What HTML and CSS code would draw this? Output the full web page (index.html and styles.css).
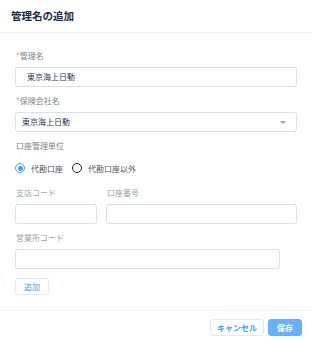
FILE: index.html
```html
<!DOCTYPE html>
<html lang="ja">
  <head>
    <meta charset="UTF-8" />
    <link rel="stylesheet" href="styles.css">
  </head>
  <body>
    <div class="dialog">
      <div class="header">
        <h2>管理名の追加</h2>
      </div>
      <div class="body">
        <label class="label"><span class="req">*</span>管理名</label>
        <div class="input input-indent">東京海上日動</div>

        <label class="label"><span class="req">*</span>保険会社名</label>
        <div class="input select">
          <span>東京海上日動</span>
          <span class="arrow"></span>
        </div>

        <label class="label">口座管理単位</label>
        <div class="radios">
          <span class="radio checked"><span class="dot"></span></span>
          <span class="radio-text">代勘口座</span>
          <span class="radio"></span>
          <span class="radio-text">代勘口座以外</span>
        </div>

        <div class="row">
          <div class="col short">
            <label class="label light">支店コード</label>
            <div class="input"></div>
          </div>
          <div class="col long">
            <label class="label light">口座番号</label>
            <div class="input"></div>
          </div>
        </div>

        <label class="label light">営業所コード</label>
        <div class="input office"></div>

        <button class="btn add">追加</button>
      </div>
      <div class="footer">
        <button class="btn cancel">キャンセル</button>
        <button class="btn save">保存</button>
      </div>
    </div>
  </body>
</html>
```

FILE: styles.css
```css
body {
  margin: 0;
  background: #ffffff;
  font-family: "Noto Sans CJK JP", "Noto Sans", sans-serif;
}
.dialog {
  width: 312px;
  height: 342px;
}
.header {
  height: 33px;
  border-bottom: 1px solid #f0f1f3;
  box-sizing: border-box;
  padding: 8px 11px 0 11px;
}
.header h2 {
  margin: 0;
  font-size: 10.5px;
  line-height: 16px;
  color: #1d2b4a;
  font-weight: 700;
}
.body {
  padding: 17px 15px 15px 15px;
  width: 282px;
  display: flex;
  flex-direction: column;
  border-bottom: 1px solid #f0f1f3;
}
.label {
  display: block;
  font-size: 8px;
  line-height: 12px;
  color: #80848b;
  margin-bottom: 5px;
  padding-left: 1px;
}
.label.light {
  color: #a0a4aa;
}
.req {
  color: #f56c6c;
}
.input {
  height: 20px;
  box-sizing: border-box;
  border: 1px solid #dcdfe6;
  border-radius: 3px;
  font-size: 8px;
  line-height: 18px;
  color: #2c3a57;
  padding: 0 6px;
  margin-bottom: 8px;
}
.input-indent {
  padding-left: 11px;
}
.select {
  display: flex;
  justify-content: space-between;
  align-items: center;
}
.arrow {
  width: 0;
  height: 0;
  border-left: 3px solid transparent;
  border-right: 3px solid transparent;
  border-top: 3px solid #9da1a8;
  margin-right: 4px;
}
.radios {
  display: flex;
  align-items: center;
  height: 12px;
  margin: 5px 0 13px 0;
}
.radio {
  width: 10px;
  height: 10px;
  box-sizing: border-box;
  border: 1.5px solid #1f1f1f;
  border-radius: 50%;
  display: flex;
  align-items: center;
  justify-content: center;
  margin-right: 6px;
}
.radio.checked {
  border: 1px solid #409eff;
}
.radio .dot {
  width: 5px;
  height: 5px;
  border-radius: 50%;
  background: #409eff;
}
.radio-text {
  font-size: 8px;
  color: #50555d;
  margin-right: 9px;
}
.row {
  display: flex;
  gap: 9px;
}
.short {
  width: 82px;
}
.long {
  flex: 1;
}
.office {
  width: 265px;
}
.btn {
  font-family: "Noto Sans CJK JP", "Noto Sans", sans-serif;
  font-size: 8px;
  height: 17px;
  padding: 0;
  border-radius: 3px;
  cursor: pointer;
}
.add {
  width: 34px;
  background: #ffffff;
  border: 1px solid #d9ecff;
  color: #409eff;
  margin-top: 1px;
}
.footer {
  display: flex;
  justify-content: flex-end;
  gap: 4px;
  padding: 8px 10px 0 0;
}
.cancel {
  width: 54px;
  background: #ffffff;
  border: 1px solid #d9ecff;
  color: #409eff;
  font-weight: 700;
}
.save {
  width: 34px;
  background: #66b1ff;
  border: 1px solid #66b1ff;
  color: #ffffff;
  font-weight: 700;
}
```
